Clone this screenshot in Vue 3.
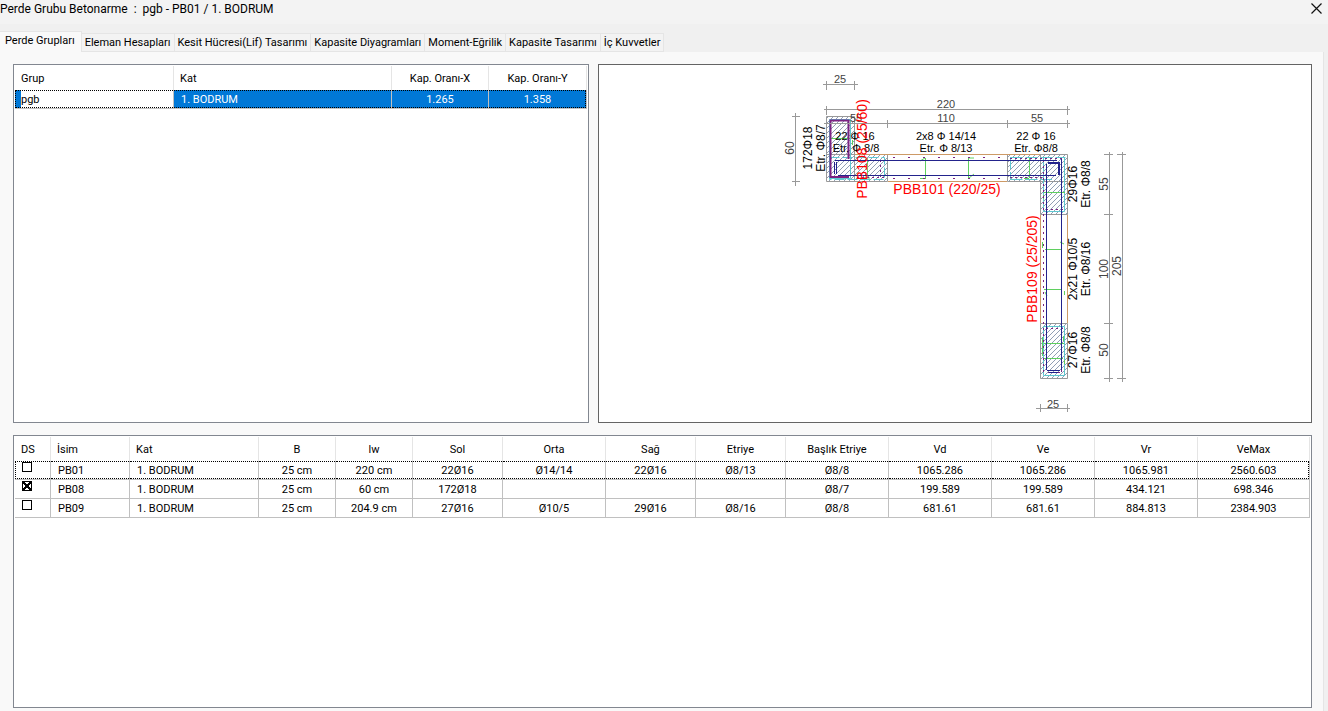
<template>
  <div class="window">
    <header class="title-bar">
      <h1 class="title">Perde Grubu Betonarme&nbsp; :&nbsp; pgb - PB01 / 1. BODRUM</h1>
      <button class="close-button" aria-label="Kapat">
        <svg width="11" height="11" viewBox="0 0 11 11">
          <path d="M0.5 0.5L10.5 10.5M10.5 0.5L0.5 10.5" stroke="#111" stroke-width="1.2" />
        </svg>
      </button>
    </header>

    <nav class="tabs">
      <button
        v-for="tab in tabs"
        :key="tab"
        class="tab"
        :class="{ active: tab === activeTab }"
        @click="activeTab = tab">{{ tab }}</button>
    </nav>

    <main class="page">
      <div class="top-row">
        <section class="panel">
          <table class="grid">
            <colgroup>
              <col v-for="(w, i) in groupWidths" :key="i" :style="{ width: w / 5.72 + '%' }" />
            </colgroup>
            <thead>
              <tr>
                <th class="left">Grup</th>
                <th class="left">Kat</th>
                <th>Kap. Oranı-X</th>
                <th>Kap. Oranı-Y</th>
              </tr>
            </thead>
            <tbody>
              <tr v-for="group in groups" :key="group.name" class="focused selected">
                <td class="editing">{{ group.name }}</td>
                <td class="left">{{ group.floor }}</td>
                <td>{{ group.x }}</td>
                <td>{{ group.y }}</td>
              </tr>
            </tbody>
          </table>
        </section>

        <section class="panel canvas">
          <svg class="drawing" viewBox="599 65 712 357">
            <defs>
              <pattern id="hatch" width="5" height="5" patternUnits="userSpaceOnUse">
                <path d="M-1 6L6 -1M-1 1L1 -1M4 6L6 4" stroke="#8494ac" stroke-width="0.9" />
              </pattern>
            </defs>

            <!-- end zones -->
            <g fill="url(#hatch)" stroke="#999">
              <path d="M826.5 116.5H854.5V154.5H887.5V181.5H826.5Z" />
              <path d="M1007.5 154.5H1067.5V214.5H1040.5V181.5H1007.5Z" />
              <path d="M1040.5 323.5H1067.5V378.5H1040.5Z" />
            </g>
            <path class="grey" d="M826 154.5H855M854.5 154V182M1040.5 154V182M1040 181.5H1068" />

            <!-- concrete edges -->
            <path class="edge" d="M855 154.5H1040M888 181.5H1007M1040.5 215V323M1067.5 215V323" />

            <!-- stirrups -->
            <g class="stirrup">
              <path d="M829.5 119.5H850.5V178.5H829.5Z" />
              <path d="M829.5 157.5H884.5V179.5H829.5Z" stroke-dasharray="10 3" />
              <path d="M1010.5 157.5H1065.5M1010.5 179.5H1052M1010.5 157V179" stroke-dasharray="12 3" />
              <path d="M1043.5 157.5V211.5H1064.5V157.5" />
              <path d="M1043.5 326.5H1064.5V375.5H1043.5Z" />
            </g>

            <!-- ties -->
            <path
              class="tie"
              d="M830 138.5H850M852.5 140V145M867.5 158V178M864 178H870M925.5 158V178M920 178.5H926M925 158L920 161
                 M968.5 158V178M968 158H974M969 178L974 174M1029.5 158V178M1024 178.5H1029
                 M1044 192.5H1065M1043.5 195V199M1045 249.5H1062M1042.5 242V248M1060 242L1064 244
                 M1044 289.5H1061M1064.5 291V295M1045 292L1047 296
                 M1044 343.5H1064M1063.5 336V341M1044 358.5H1063M1064.5 360V364M1042.5 337V356" />

            <!-- rebar dots -->
            <g class="rebar">
              <path d="M893 157.5H1006M893 178.5H1006" stroke-dasharray="2 13" />
              <path d="M857 177.5H886M880.5 160V178M1010 158.5H1062M1010 177.5H1042" stroke-dasharray="2 3" />
              <path d="M1043.5 160V374M1061.5 160V374" stroke-dasharray="2 4" />
              <path d="M1046 209.5H1063M1046 328.5H1063M1048 372.5H1060" stroke-dasharray="2 3" />
            </g>
            <path class="bar" d="M835 160.5H1057M838 175.5H1056M834.5 162V174M836.5 162V174M1046.5 164V370M1061.5 159V370M1047 370.5H1060M1049 372.5H1058" />
            <path class="corner" d="M1048 163H1059V175" />
            <path class="hoop" d="M848.5 159V120.5H830.5V177H849" />

            <!-- dimension lines -->
            <path
              class="grey"
              d="M823 84.5H858M826.5 81V90M854.5 81V90
                 M824 109.5H1070M826.5 106V115M1067.5 106V115
                 M824 123.5H1070M826.5 120V128M887.5 120V128M1007.5 120V128M1067.5 120V128
                 M795.5 113V186M792 116.5H800M792 181.5H800
                 M1109.5 152V382M1104 154.5H1113M1104 214.5H1113M1104 323.5H1113M1104 378.5H1113
                 M1122.5 152V382M1117 154.5H1126M1117 378.5H1126
                 M1036 408.5H1070M1040.5 404V412M1067.5 404V412" />

            <text
              v-for="(label, i) in labels"
              :key="i"
              :class="label.kind"
              :transform="`translate(${label.x} ${label.y}) rotate(${label.turned ? -90 : 0})`"
              text-anchor="middle">{{ label.text }}</text>
          </svg>
        </section>
      </div>

      <section class="panel bottom">
        <table class="grid">
          <colgroup>
            <col v-for="(w, i) in wallWidths" :key="i" :style="{ width: w / 12.95 + '%' }" />
          </colgroup>
          <thead>
            <tr>
              <th v-for="(column, i) in wallColumns" :key="column" :class="{ left: i < 3 }">{{ column }}</th>
            </tr>
          </thead>
          <tbody>
            <tr v-for="(wall, i) in walls" :key="wall.name" :class="{ focused: i === 0 }">
              <td class="check">
                <input type="checkbox" v-model="wall.ds" :aria-label="'DS ' + wall.name" />
              </td>
              <td class="left">{{ wall.name }}</td>
              <td class="left">1. BODRUM</td>
              <td v-for="(value, j) in wall.values" :key="j">{{ value }}</td>
            </tr>
          </tbody>
        </table>
      </section>
    </main>
  </div>
</template>

<script setup>
import { ref } from 'vue'

const tabs = [
  'Perde Grupları',
  'Eleman Hesapları',
  'Kesit Hücresi(Lif) Tasarımı',
  'Kapasite Diyagramları',
  'Moment-Eğrilik',
  'Kapasite Tasarımı',
  'İç Kuvvetler'
]
const activeTab = ref(tabs[0])

const groupWidths = [159, 218, 97, 98]
const groups = [{ name: 'pgb', floor: '1. BODRUM', x: '1.265', y: '1.358' }]

const wallWidths = [36, 79, 129, 77, 77, 90, 103, 90, 90, 103, 103, 103, 103, 112]
const wallColumns = ['DS', 'İsim', 'Kat', 'B', 'lw', 'Sol', 'Orta', 'Sağ', 'Etriye', 'Başlık Etriye', 'Vd', 'Ve', 'Vr', 'VeMax']
const walls = ref([
  {
    ds: false,
    name: 'PB01',
    values: ['25 cm', '220 cm', '22Ø16', 'Ø14/14', '22Ø16', 'Ø8/13', 'Ø8/8', '1065.286', '1065.286', '1065.981', '2560.603']
  },
  {
    ds: true,
    name: 'PB08',
    values: ['25 cm', '60 cm', '172Ø18', '', '', '', 'Ø8/7', '199.589', '199.589', '434.121', '698.346']
  },
  {
    ds: false,
    name: 'PB09',
    values: ['25 cm', '204.9 cm', '27Ø16', 'Ø10/5', '29Ø16', 'Ø8/16', 'Ø8/8', '681.61', '681.61', '884.813', '2384.903']
  }
])

const labels = [
  { text: '25', x: 840, y: 83, kind: 'dim' },
  { text: '220', x: 946, y: 108, kind: 'dim' },
  { text: '55', x: 856, y: 122, kind: 'dim' },
  { text: '110', x: 946, y: 122, kind: 'dim' },
  { text: '55', x: 1037, y: 122, kind: 'dim' },
  { text: '25', x: 1053, y: 408, kind: 'dim' },
  { text: '60', x: 794, y: 148, kind: 'dim tall', turned: true },
  { text: '55', x: 1108, y: 184, kind: 'dim tall', turned: true },
  { text: '100', x: 1108, y: 269, kind: 'dim tall', turned: true },
  { text: '50', x: 1108, y: 350, kind: 'dim tall', turned: true },
  { text: '205', x: 1121, y: 266, kind: 'dim tall', turned: true },
  { text: '22 Φ 16', x: 855, y: 140, kind: 'note' },
  { text: 'Etr.  Φ 8/8', x: 856, y: 152, kind: 'note' },
  { text: '2x8 Φ 14/14', x: 946, y: 140, kind: 'note' },
  { text: 'Etr.  Φ 8/13', x: 946, y: 152, kind: 'note' },
  { text: '22 Φ 16', x: 1036, y: 140, kind: 'note' },
  { text: 'Etr.  Φ8/8', x: 1036, y: 152, kind: 'note' },
  { text: '172Φ18', x: 812, y: 148, kind: 'note tall', turned: true },
  { text: 'Etr.  Φ8/7', x: 825, y: 148, kind: 'note tall', turned: true },
  { text: '29Φ16', x: 1077, y: 184, kind: 'note tall', turned: true },
  { text: 'Etr.  Φ8/8', x: 1090, y: 184, kind: 'note tall', turned: true },
  { text: '2x21 Φ10/5', x: 1077, y: 269, kind: 'note tall', turned: true },
  { text: 'Etr.  Φ8/16', x: 1090, y: 269, kind: 'note tall', turned: true },
  { text: '27Φ16', x: 1077, y: 350, kind: 'note tall', turned: true },
  { text: 'Etr.  Φ8/8', x: 1090, y: 350, kind: 'note tall', turned: true },
  { text: 'PBB101 (220/25)', x: 947, y: 194, kind: 'name' },
  { text: 'PBB108 (25/60)', x: 867, y: 149, kind: 'name', turned: true },
  { text: 'PBB109 (25/205)', x: 1037, y: 269, kind: 'name', turned: true }
]
</script>

<style>
body {
  margin: 0;
}
</style>

<style scoped>
.window {
  display: flex;
  flex-direction: column;
  height: 100vh;
  background: #f0f0f0;
  color: #000;
  font-family: Roboto, "Liberation Sans", sans-serif;
  font-size: 11px;
}

button {
  font: inherit;
  color: inherit;
}

.title-bar {
  display: flex;
  justify-content: space-between;
  align-items: flex-start;
  height: 24px;
  background: #f3f3f3;
}

.title {
  margin: 0;
  font-size: 12px;
  font-weight: 400;
  line-height: 18px;
}

.close-button {
  display: flex;
  padding: 3px 6px;
  border: none;
  background: transparent;
}

.tabs {
  display: flex;
  align-items: flex-end;
  height: 28px;
}

.tab {
  height: 19px;
  margin: 0;
  padding: 1px 3px 0;
  border: 1px solid #e5e5e5;
  border-left: none;
  background: #f3f3f3;
  line-height: 16px;
}

.tab.active {
  height: 21px;
  padding: 0 6px 2px 5px;
  border-bottom: none;
  background: #f9f9f9;
}

.page {
  display: flex;
  flex-direction: column;
  flex: 1;
  gap: 12px;
  min-height: 0;
  margin-right: 4px;
  padding: 12px 11px 3px 13px;
  border-right: 1px solid #e5e5e5;
  background: #f9f9f9;
}

.top-row {
  display: grid;
  grid-template-columns: 576fr 714fr;
  gap: 9px;
  flex: 359 1 0;
  min-height: 0;
}

.panel {
  box-sizing: border-box;
  min-width: 0;
  min-height: 0;
  padding: 1px;
  border: 1px solid #828790;
  background: #fff;
}

.canvas {
  padding: 0;
  border-color: #646464;
}

.bottom {
  flex: 269 1 0;
}

.grid {
  width: 100%;
  table-layout: fixed;
  border-collapse: separate;
  border-spacing: 0;
}

.grid th,
.grid td {
  box-sizing: border-box;
  padding: 0 2px;
  text-align: center;
  white-space: nowrap;
}

.grid th {
  height: 24px;
  border-right: 1px solid #e5e5e5;
  font-weight: 400;
}

.grid td {
  position: relative;
  height: 19px;
  padding-top: 2px;
  border-right: 1px solid #c0c0c0;
  border-bottom: 1px solid #c0c0c0;
  line-height: 16px;
}

.grid th.left {
  padding-left: 6px;
  text-align: left;
}

.grid td.left {
  padding-left: 7px;
  text-align: left;
}

.focused td::before {
  content: "";
  position: absolute;
  inset: 0;
  border-top: 1px dotted #000;
  border-bottom: 1px dotted #000;
}

.focused td:first-child::before {
  border-left: 1px dotted #000;
}

.focused td:last-child::before {
  border-right: 1px dotted #000;
}

.selected td {
  background: #0078d7;
  color: #fff;
}

.grid td.editing {
  padding-left: 6px;
  background: linear-gradient(to right, #0078d7 6px, #fff 6px);
  color: #000;
  text-align: left;
}

.grid td.check {
  padding: 1px 0 0 7px;
  text-align: left;
  vertical-align: top;
  line-height: 0;
}

.check input {
  position: relative;
  appearance: none;
  width: 10px;
  height: 10px;
  margin: 0;
  border: 1px solid #000;
  background: #fff;
}

.check input:checked {
  background:
    linear-gradient(45deg, transparent 42%, #000 42% 58%, transparent 58%),
    linear-gradient(-45deg, transparent 42%, #000 42% 58%, transparent 58%),
    #fff;
}

.drawing {
  display: block;
  width: 100%;
  height: 100%;
  fill: none;
  font-family: "Liberation Sans", Arial, sans-serif;
  font-size: 11px;
}

.grey {
  stroke: #999;
}

.edge {
  stroke: #cd9a66;
}

.stirrup {
  stroke: #5fc8d0;
}

.tie {
  stroke: #5fcf5f;
}

.rebar {
  stroke: #7b2382;
}

.bar {
  stroke: #23238c;
}

.corner {
  stroke: #23238c;
  stroke-width: 2;
}

.hoop {
  stroke: #7b2382;
  stroke-width: 2;
}

.dim {
  fill: #444;
}

.note {
  fill: #000;
}

.tall {
  font-size: 12px;
}

.name {
  fill: #f00;
  font-size: 14px;
}
</style>
